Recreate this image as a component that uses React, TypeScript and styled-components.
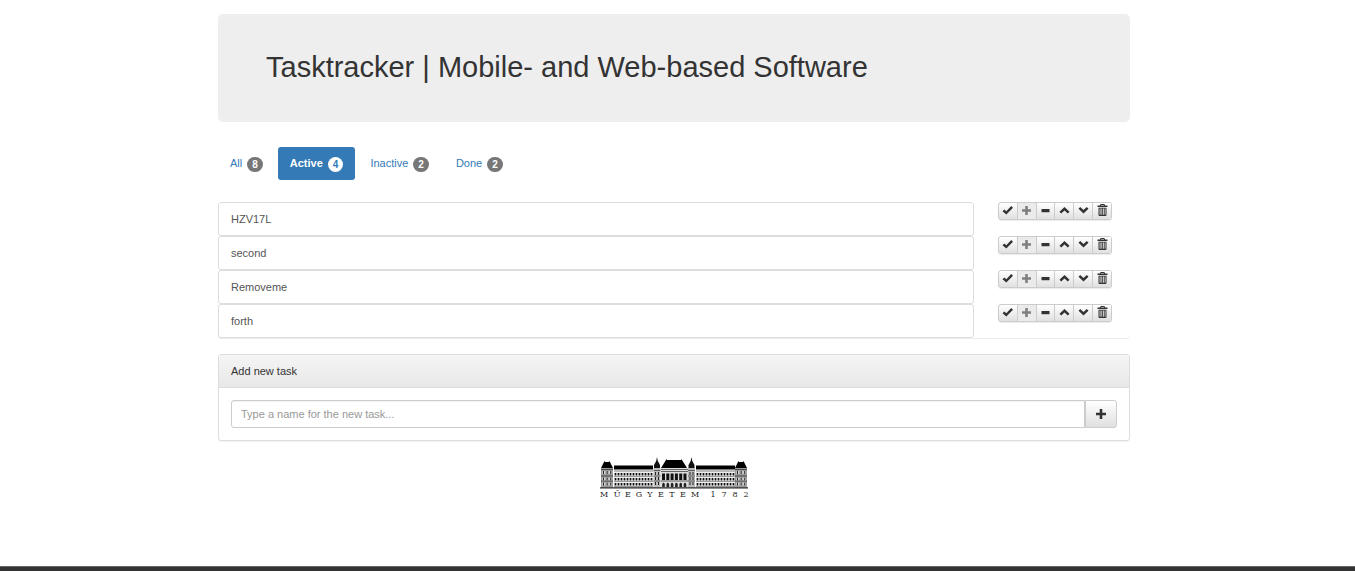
import React, { useState } from "react";
import styled, { createGlobalStyle, css } from "styled-components";

const GlobalStyle = createGlobalStyle`
  *, *::before, *::after { box-sizing: border-box; }
  body {
    margin: 0;
    background: #fff;
    color: #333;
    font-family: "Liberation Sans", Arial, sans-serif;
    font-size: 11px;
    line-height: 16px;
  }
  button, input { font-family: inherit; font-size: inherit; line-height: inherit; }
`;

const Page = styled.div`
  display: flex;
  flex-direction: column;
  min-height: 100vh;
`;

const Container = styled.main`
  flex: 1;
  width: 100%;
  padding: 14px 19px 0 12px;
`;

const Content = styled.div`
  max-width: 912px;
  margin: 0 auto;
`;

const Jumbotron = styled.header`
  padding: 36px 48px 38px;
  border-radius: 5px;
  background: #eee;
`;

const Title = styled.h1`
  margin: 0;
  font-size: 29px;
  line-height: 34px;
  font-weight: 400;
`;

const Pills = styled.nav`
  display: flex;
  gap: 3px;
  margin: 25px 0 22px;
`;

const Badge = styled.span<{ $active?: boolean }>`
  margin-left: 5px;
  padding: 2px 5px;
  border-radius: 8px;
  background: ${(p) => (p.$active ? "#fff" : "#777")};
  color: ${(p) => (p.$active ? "#337ab7" : "#fff")};
  font-size: 10px;
  line-height: 11px;
  font-weight: 700;
`;

const Pill = styled.a<{ $active?: boolean }>`
  display: flex;
  align-items: center;
  height: 33px;
  padding: 2px 12px 0;
  border-radius: 3px;
  color: #337ab7;
  text-decoration: none;
  ${(p) =>
    p.$active &&
    css`
      background: #337ab7;
      color: #fff;
      font-weight: 700;
    `}
`;

const PillLabel = styled.span`
  padding-bottom: 4px;
`;

const TaskList = styled.ul`
  margin: 0 0 16px;
  padding: 0;
  list-style: none;
  border-radius: 3px;
  box-shadow: 0 1px 1px rgba(0, 0, 0, 0.08);
`;

const TaskRow = styled.li`
  display: grid;
  grid-template-columns: minmax(0, 1fr) 132px;
  column-gap: 24px;
  align-items: start;
`;

const TaskName = styled.div`
  height: 34px;
  padding: 8px 12px;
  border: 1px solid #ddd;
  border-radius: 3px;
  color: #555;
`;

const Tools = styled.div`
  display: flex;
  border-right: 1px solid #ccc;
  border-radius: 3px;
  width: 114px;
  height: 18px;
  overflow: hidden;
  box-shadow: 0 1px 1px rgba(0, 0, 0, 0.08);
`;

const raised = css`
  display: flex;
  align-items: center;
  justify-content: center;
  margin: 0;
  padding: 0;
  border: 1px solid #ccc;
  background: linear-gradient(#fff, #e0e0e0);
  color: #333;
  cursor: pointer;
`;

const ToolButton = styled.button`
  ${raised}
  flex: 1 0 0;
  height: 18px;
  padding-bottom: 1px;
  border-right: 0;
  &:first-child { border-radius: 3px 0 0 3px; }
  &:disabled {
    background: #ebebeb;
    color: #808080;
    cursor: not-allowed;
  }
`;

const Glyph = styled.svg`
  display: block;
  fill: currentColor;
`;

const Panel = styled.section`
  border: 1px solid #ddd;
  border-radius: 3px;
  box-shadow: 0 1px 1px rgba(0, 0, 0, 0.05);
`;

const PanelHeading = styled.label`
  display: block;
  padding: 8px 12px;
  border-bottom: 1px solid #ddd;
  background: linear-gradient(#f5f5f5, #e8e8e8);
`;

const AddForm = styled.form`
  display: flex;
  padding: 12px;
`;

const NameInput = styled.input`
  flex: 1;
  min-width: 0;
  height: 28px;
  padding: 0 9px;
  border: 1px solid #ccc;
  border-radius: 3px 0 0 3px;
  box-shadow: inset 0 1px 1px rgba(0, 0, 0, 0.05);
  color: #555;
  &::placeholder { color: #999; }
`;

const AddButton = styled.button`
  ${raised}
  width: 32px;
  height: 28px;
  border-radius: 0 3px 3px 0;
`;

const LogoRow = styled.div`
  display: flex;
  justify-content: center;
  padding: 15px 0 16px;
`;

const FooterBar = styled.footer`
  height: 5px;
  border-top: 1px solid #666;
  background: #333;
`;

const icons = {
  done: <path d="M1.500 7.200 3.300 5.400 5.300 7.200 10.200 2 12 3.800 5.300 10.500Z" />,
  activate: <path d="M5.200 2H7.800V5.200H11V7.800H7.800V11H5.200V7.800H2V5.200H5.200Z" />,
  deactivate: <path d="M2.500 5H10.500V8.300H2.500Z" />,
  up: <path d="M6.500 3 11.500 7.700 9.800 9.500 6.500 6.500 3.200 9.500 1.500 7.700Z" />,
  down: <path d="M6.500 9.500 1.500 4.800 3.200 3 6.500 6 9.800 3 11.500 4.800Z" />,
  remove: (
    <path
      fillRule="evenodd"
      d="M4 1.500Q4 0 5 0H8Q9 0 9 1.500H11.500V3H1.500V1.500ZM5 1.500H8V1H5ZM2.500 3.700H10.500V11Q10.500 12 9.500 12H3.500Q2.500 12 2.500 11ZM3.600 4.500V10.800H4.500V4.500ZM5.400 4.500V10.800H6.200V4.500ZM7 4.500V10.800H7.800V4.500ZM8.700 4.500V10.800H9.500V4.500Z"
    />
  ),
};

type IconName = keyof typeof icons;

const Icon = ({ name }: { name: IconName }) => (
  <Glyph width="13" height="13" viewBox="0 0 13 13" aria-hidden="true">
    {icons[name]}
  </Glyph>
);

const toolset: { icon: IconName; label: string }[] = [
  { icon: "done", label: "Mark as done" },
  { icon: "activate", label: "Activate" },
  { icon: "deactivate", label: "Deactivate" },
  { icon: "up", label: "Move up" },
  { icon: "down", label: "Move down" },
  { icon: "remove", label: "Delete" },
];

const filters = [
  { name: "All", count: 8 },
  { name: "Active", count: 4 },
  { name: "Inactive", count: 2 },
  { name: "Done", count: 2 },
];

const tasks = ["HZV17L", "second", "Removeme", "forth"];

const motto: [string, number][] = [
  ["M", 5], ["Ű", 18], ["E", 29], ["G", 40], ["Y", 51], ["E", 62], ["T", 73],
  ["E", 84], ["M", 96], ["1", 114], ["7", 125], ["8", 136], ["2", 147],
];

const range = (n: number) => Array.from({ length: n }, (_, i) => i);

/* One side wing: dark cornice, then three floors of windows. */
const Wing = ({ x }: { x: number }) => (
  <g>
    <rect x={x} y="9.500" width="39" height="4" fill="#000" />
    <rect x={x} y="14" width="39" height="17.500" fill="#ddd" />
    <path d={`M${x} 15h39M${x} 20.500h39M${x} 25.500h39M${x} 30.500h39`} stroke="#888" strokeWidth=".8" />
    {[17, 22, 27].map((y) =>
      range(13).map((i) => (
        <g key={`${y}-${i}`}>
          <rect x={x + i * 3} y={y - 0.5} width="3" height="3.200" fill="#fff" />
          <rect x={x + 0.6 + i * 3} y={y} width="1.800" height="2.500" fill="#111" />
        </g>
      ))
    )}
  </g>
);

const Pavilion = ({ x }: { x: number }) => (
  <g>
    <path d={`M${x} 12 ${x + 3} 6V5L${x + 4} 6H${x + 8}L${x + 9} 5V6L${x + 12} 12Z`} fill="#000" />
    <rect x={x} y="12" width="12" height="19.500" fill="#999" />
    <path d={`M${x} 13.500h12M${x} 20h12M${x} 25h12`} stroke="#333" strokeWidth=".8" />
    {[15, 21.5, 26.5].map((y) =>
      range(3).map((i) => (
        <g key={`${y}-${i}`}>
          <rect x={x + 1 + i * 3.7} y={y} width="2.700" height="3" fill="#eee" />
          <rect x={x + 1.8 + i * 3.7} y={y} width="1.200" height="3" fill="#222" />
        </g>
      ))
    )}
  </g>
);

const Spire = ({ x }: { x: number }) => (
  <g>
    <path d={`M${x} 1 ${x + 0.8} 5 ${x + 3} 9V12H${x - 3}V9L${x - 0.8} 5Z`} fill="#111" />
    <rect x={x - 3.5} y="12" width="7" height="19.500" fill="#bbb" />
    <path d={`M${x - 3.5} 14.500h7M${x - 3.5} 20h7M${x - 3.5} 25h7`} stroke="#444" strokeWidth=".8" />
    <path d={`M${x - 1.5} 16v14M${x + 1.5} 16v14`} stroke="#222" strokeDasharray="3 2" />
  </g>
);

const Logo = () => (
  <svg width="151" height="42" viewBox="0 0 151 42" role="img" aria-label="Műegyetem 1782">
    <Wing x={15} />
    <Wing x={97} />
    <Pavilion x={2} />
    <Pavilion x={136} />
    <path d="M62 12 67 4V3L68 4H82L83 3V4L88 12Z" fill="#000" />
    <rect x="62" y="12" width="27" height="19.500" fill="#ddd" />
    <path d="M62 13.500h27M62 15.500h27M62 25h27" stroke="#444" strokeWidth=".8" />
    {range(6).map((i) => (
      <g key={i}>
        <rect x={63 + i * 4.3} y="17.500" width="3" height="6.500" fill="#111" />
        <path d={`M${63.2 + i * 4.3} 31v-3q1.300-2.500 2.600 0v3z`} fill="#222" />
      </g>
    ))}
    <Spire x={58} />
    <Spire x={92.5} />
    <path d="M1 31.800H149" stroke="#222" strokeWidth="1.200" />
    <g fill="#222" fontFamily="'DejaVu Serif', serif" fontSize="8" textAnchor="middle">
      {motto.map(([char, x]) => (
        <text key={x} x={x} y="41">
          {char}
        </text>
      ))}
    </g>
  </svg>
);

export default function App() {
  const [active, setActive] = useState("Active");

  return (
    <Page>
      <GlobalStyle />
      <Container>
        <Content>
          <Jumbotron>
            <Title>Tasktracker | Mobile- and Web-based Software</Title>
          </Jumbotron>

          <Pills aria-label="Task filter">
            {filters.map(({ name, count }) => (
              <Pill
                key={name}
                href={`#${name.toLowerCase()}`}
                $active={name === active}
                onClick={() => setActive(name)}
              >
                <PillLabel>{name}</PillLabel>
                <Badge $active={name === active}>{count}</Badge>
              </Pill>
            ))}
          </Pills>

          <TaskList>
            {tasks.map((task) => (
              <TaskRow key={task}>
                <TaskName>{task}</TaskName>
                <Tools role="group" aria-label={`Actions for ${task}`}>
                  {toolset.map(({ icon, label }) => (
                    <ToolButton
                      key={icon}
                      type="button"
                      aria-label={label}
                      disabled={icon === "activate"}
                    >
                      <Icon name={icon} />
                    </ToolButton>
                  ))}
                </Tools>
              </TaskRow>
            ))}
          </TaskList>

          <Panel>
            <PanelHeading htmlFor="new-task">Add new task</PanelHeading>
            <AddForm onSubmit={(e) => e.preventDefault()}>
              <NameInput id="new-task" type="text" placeholder="Type a name for the new task..." />
              <AddButton type="submit" aria-label="Add task">
                <Glyph width="12" height="12" viewBox="0 0 12 12" aria-hidden="true">
                  <path d="M4.700 1H7.300V4.700H11V7.300H7.300V11H4.700V7.300H1V4.700H4.700Z" />
                </Glyph>
              </AddButton>
            </AddForm>
          </Panel>

          <LogoRow>
            <Logo />
          </LogoRow>
        </Content>
      </Container>
      <FooterBar />
    </Page>
  );
}
